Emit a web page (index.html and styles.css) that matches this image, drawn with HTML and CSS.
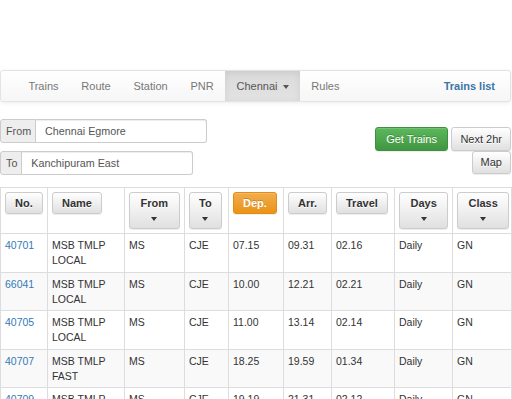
FILE: index.html
```html
<!DOCTYPE html>
<html lang="en">
<head>
  <meta charset="UTF-8">
  <meta name="viewport" content="width=device-width, initial-scale=1.0">
  <title>Trains list</title>
  <link rel="stylesheet" href="styles.css">
</head>
<body>
  <div class="page">
    <div class="navbar">
      <ul class="nav">
        <li><a href="">Trains</a></li>
        <li><a href="">Route</a></li>
        <li><a href="">Station</a></li>
        <li><a href="">PNR</a></li>
        <li class="active"><a href="">Chennai <span class="caret"></span></a></li>
        <li><a href="">Rules</a></li>
      </ul>
      <a class="brand" href="">Trains list</a>
    </div>

    <div class="search">
      <div class="fields">
        <div class="group group-from">
          <span class="addon">From</span>
          <input type="text" value="Chennai Egmore">
        </div>
        <div class="group group-to">
          <span class="addon">To</span>
          <input type="text" value="Kanchipuram East">
        </div>
      </div>
      <div class="actions">
        <div class="line">
          <button class="btn btn-success">Get Trains</button>
          <button class="btn">Next 2hr</button>
        </div>
        <div class="line">
          <button class="btn btn-map">Map</button>
        </div>
      </div>
    </div>

    <table class="trains">
      <colgroup>
        <col style="width:47px">
        <col style="width:77px">
        <col style="width:60px">
        <col style="width:44px">
        <col style="width:55px">
        <col style="width:48px">
        <col style="width:63px">
        <col style="width:58px">
        <col style="width:59px">
      </colgroup>
      <thead>
        <tr>
          <th><button class="btn btn-head">No.</button></th>
          <th><button class="btn btn-head">Name</button></th>
          <th><button class="btn btn-head btn-dd">From<br><span class="caret"></span></button></th>
          <th><button class="btn btn-head">To<br><span class="caret"></span></button></th>
          <th><button class="btn btn-head btn-warning">Dep.</button></th>
          <th><button class="btn btn-head">Arr.</button></th>
          <th><button class="btn btn-head">Travel</button></th>
          <th><button class="btn btn-head btn-dd">Days<br><span class="caret"></span></button></th>
          <th><button class="btn btn-head btn-dd">Class<br><span class="caret"></span></button></th>
        </tr>
      </thead>
      <tbody>
        <tr>
          <td><a href="">40701</a></td><td>MSB TMLP LOCAL</td><td>MS</td><td>CJE</td>
          <td>07.15</td><td>09.31</td><td>02.16</td><td>Daily</td><td>GN</td>
        </tr>
        <tr>
          <td><a href="">66041</a></td><td>MSB TMLP LOCAL</td><td>MS</td><td>CJE</td>
          <td>10.00</td><td>12.21</td><td>02.21</td><td>Daily</td><td>GN</td>
        </tr>
        <tr>
          <td><a href="">40705</a></td><td>MSB TMLP LOCAL</td><td>MS</td><td>CJE</td>
          <td>11.00</td><td>13.14</td><td>02.14</td><td>Daily</td><td>GN</td>
        </tr>
        <tr>
          <td><a href="">40707</a></td><td>MSB TMLP FAST</td><td>MS</td><td>CJE</td>
          <td>18.25</td><td>19.59</td><td>01.34</td><td>Daily</td><td>GN</td>
        </tr>
        <tr>
          <td><a href="">40709</a></td><td>MSB TMLP LOCAL</td><td>MS</td><td>CJE</td>
          <td>19.19</td><td>21.31</td><td>02.12</td><td>Daily</td><td>GN</td>
        </tr>
      </tbody>
    </table>
  </div>
</body>
</html>
```

FILE: styles.css
```css
* {
  margin: 0;
  padding: 0;
  box-sizing: border-box;
}
body {
  font-family: "Liberation Sans", Arial, sans-serif;
  font-size: 10.5px;
  line-height: 15px;
  color: #333;
  background: #fff;
}
a {
  color: #337ab7;
  text-decoration: none;
}
.page {
  width: 511px;
  padding-top: 70px;
}

/* navbar */
.navbar {
  display: flex;
  align-items: stretch;
  height: 32px;
  padding-left: 16px;
  font-size: 11px;
  border: 1px solid #e3e3e3;
  border-radius: 3px;
  background: linear-gradient(to bottom, #fff 0, #f6f6f6 100%);
  box-shadow: inset 0 1px 0 rgba(255,255,255,.15), 0 1px 4px rgba(0,0,0,.08);
}
.nav {
  display: flex;
  list-style: none;
}
.nav li a {
  display: block;
  padding: 7.5px 11.4px;
  color: #777;
}
.nav li.active a {
  color: #555;
  background: linear-gradient(to bottom, #dbdbdb 0, #e2e2e2 100%);
  box-shadow: inset 0 2px 7px rgba(0,0,0,.075);
}
.nav .caret {
  margin-left: 2px;
}
.brand {
  margin-left: auto;
  padding: 7.5px 15px 7.5px 12px;
  font-weight: bold;
  color: #3a76a6;
}
.caret {
  display: inline-block;
  width: 0;
  height: 0;
  vertical-align: middle;
  border-top: 4px solid;
  border-left: 3.5px solid transparent;
  border-right: 3.5px solid transparent;
}

/* search form */
.search {
  display: flex;
  justify-content: space-between;
  margin-top: 17px;
}
.group {
  display: flex;
  height: 24px;
  font-size: 10.75px;
}
.group + .group {
  margin-top: 8px;
}
.group-from {
  width: 207px;
}
.group-to {
  width: 193px;
}
.addon {
  padding: 0 4px 0 5px;
  line-height: 22px;
  color: #555;
  background-color: #eee;
  border: 1px solid #ccc;
  border-radius: 3px 0 0 3px;
}
.group input {
  flex: 1;
  min-width: 0;
  padding: 0 9px;
  font: inherit;
  color: #555;
  border: 1px solid #ccc;
  border-left: 0;
  border-radius: 0 3px 3px 0;
  box-shadow: inset 0 1px 1px rgba(0,0,0,.075);
}
.actions {
  margin-top: 8px;
}
.actions .line {
  display: flex;
  justify-content: flex-end;
  gap: 3px;
}
.actions .btn {
  height: 24px;
  padding: 0 8px;
  font-size: 11px;
}
.actions .btn-success {
  padding: 0 10.5px;
}
.actions .btn-map {
  height: 23px;
}

/* buttons */
.btn {
  font: inherit;
  line-height: 15px;
  color: #333;
  text-shadow: 0 1px 0 #fff;
  cursor: pointer;
  border: 1px solid #ccc;
  border-radius: 3px;
  background: linear-gradient(to bottom, #fff 0, #e0e0e0 100%);
  box-shadow: inset 0 1px 0 rgba(255,255,255,.15), 0 1px 1px rgba(0,0,0,.075);
}
.btn-success {
  color: #fff;
  text-shadow: 0 -1px 0 rgba(0,0,0,.2);
  border-color: #3e8f3e;
  background: linear-gradient(to bottom, #5cb85c 0, #419641 100%);
}
.btn-warning {
  color: #fff;
  text-shadow: 0 -1px 0 rgba(0,0,0,.2);
  border-color: #e38d13;
  background: linear-gradient(to bottom, #f0ad4e 0, #eb9316 100%);
}
.btn-head {
  padding: 2.5px 9px;
  font-size: 11px;
  font-weight: bold;
}
.btn-dd {
  padding: 2.5px 10.5px;
}

/* table */
.trains {
  width: 511px;
  margin-top: 12px;
  table-layout: fixed;
  border-collapse: collapse;
  border: 1px solid #ddd;
}
.trains th,
.trains td {
  padding: 4px 4px 3.5px;
  text-align: left;
  vertical-align: top;
  border: 1px solid #ddd;
}
.trains th {
  padding-bottom: 4px;
}
.trains tbody tr:nth-child(even) {
  background-color: #f9f9f9;
}
```
